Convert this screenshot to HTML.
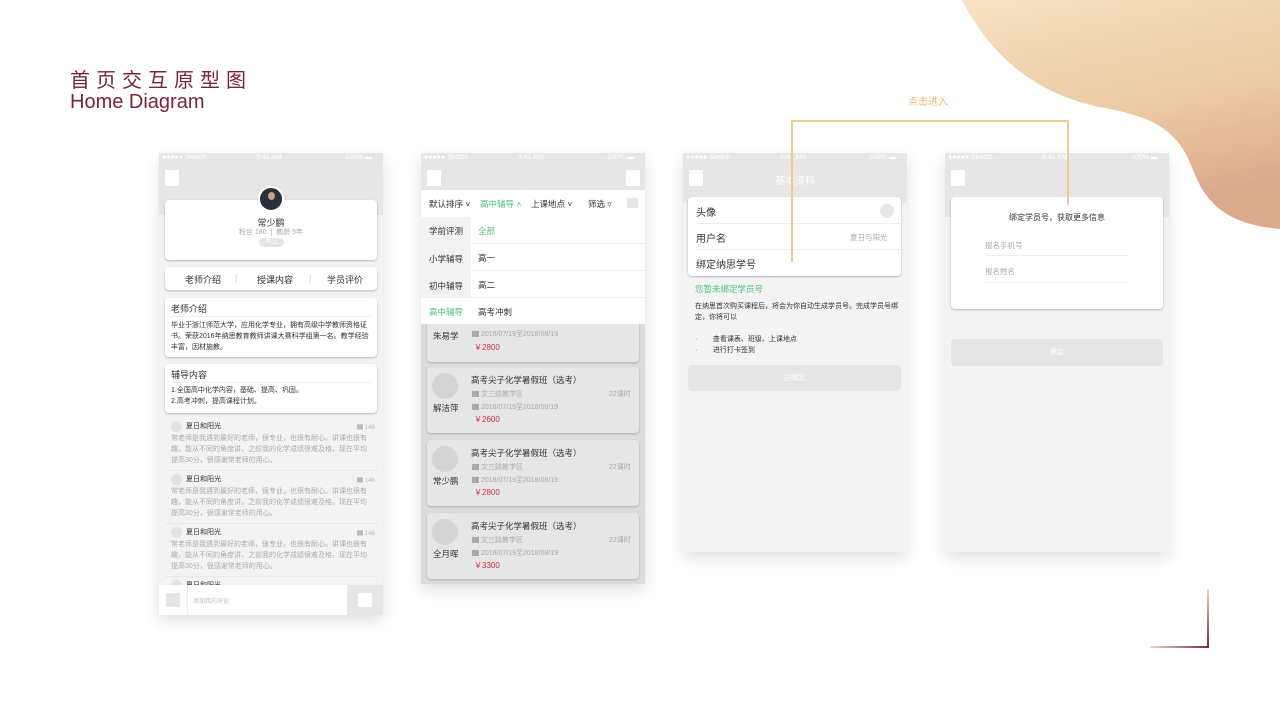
<!DOCTYPE html><html><head><meta charset="utf-8"><style>
*{margin:0;padding:0;box-sizing:border-box}
body{width:1280px;height:720px;overflow:hidden;background:#fff;position:relative;font-family:"Liberation Sans","Noto Sans CJK SC",sans-serif;color:#333}
.a{position:absolute}
.ph{position:absolute;background:#f3f3f3;box-shadow:0 6px 14px rgba(0,0,0,.12);overflow:hidden}
.sb{position:absolute;left:0;top:0;width:224px;height:11px;font-size:7px;color:#fff}
.sb span{position:absolute;top:1px}
.hd{position:absolute;left:0;top:0;width:224px;background:#e6e6e6}
.sq{position:absolute;width:14px;height:16px;background:#fff}
.card{position:absolute;background:#fff;border-radius:4px;box-shadow:0 1px 2px rgba(0,0,0,.25)}
.t{position:absolute;white-space:nowrap}
</style></head><body>
<svg class="a" style="left:0;top:0" width="1280" height="720">
<defs><linearGradient id="g" x1="0" y1="0" x2="0.3" y2="1"><stop offset="0" stop-color="#f6e2c2"/><stop offset="0.6" stop-color="#ecc9a4"/><stop offset="1" stop-color="#dca98d"/></linearGradient>
<linearGradient id="g2" x1="0" y1="0" x2="1" y2="0"><stop offset="0" stop-color="#f2d8c8"/><stop offset="1" stop-color="#7a2a3a"/></linearGradient>
<linearGradient id="g3" x1="0" y1="0" x2="0" y2="1"><stop offset="0" stop-color="#f2d8c8"/><stop offset="1" stop-color="#7a2a3a"/></linearGradient></defs>
<path d="M962,0 C990,55 1035,95 1105,108 C1160,118 1180,135 1193,170 C1208,210 1235,225 1280,229 L1280,0 Z" fill="url(#g)"/>
<rect x="1150" y="646" width="59" height="2" fill="url(#g2)"/>
<rect x="1207" y="589" width="2" height="59" fill="url(#g3)"/>
</svg>
<div class="t" style="left:70px;top:70px;font-size:20px;line-height:22px;letter-spacing:6px;color:#7b2338">首页交互原型图</div>
<div class="t" style="left:70px;top:91px;font-size:20px;line-height:22px;color:#7b2338">Home Diagram</div>
<div class="t" style="left:908px;top:93px;font-size:10px;color:#f0b878">点击进入</div>

<!-- phone 1 -->
<div class="ph" style="left:159px;top:153px;width:224px;height:462px">
<div class="hd" style="height:62px"></div>
<div class="sb"><span style="left:3px">●●●●● Sketch</span><span style="left:97px">9:41 AM</span><span style="left:186px">100% ▬</span></div>
<div class="sq" style="left:6px;top:17px"></div>
<div class="card" style="left:6px;top:47px;width:212px;height:60px"></div>
<div class="a" style="left:99px;top:33px;width:26px;height:26px;border-radius:50%;background:#2b2f3a;border:2px solid #fff"><div class="a" style="left:8px;top:4px;width:7px;height:8px;border-radius:50%;background:#c9a08a"></div></div>
<div class="t" style="left:0;width:224px;text-align:center;top:63px;font-size:9px">常少鹏</div>
<div class="t" style="left:0;width:224px;text-align:center;top:74px;font-size:7px;color:#aaa">粉丝 180 &nbsp;|&nbsp; 教龄 5年</div>
<div class="a" style="left:100px;top:85px;width:25px;height:9px;border-radius:5px;background:#e6e6e6;font-size:6px;color:#fff;text-align:center;line-height:9px">关注</div>
<div class="card" style="left:6px;top:114px;width:212px;height:23px;font-size:9px"><span class="t" style="left:20px;top:6px">老师介绍</span><span class="t" style="left:70px;top:6px;color:#ccc">|</span><span class="t" style="left:92px;top:6px">授课内容</span><span class="t" style="left:144px;top:6px;color:#ccc">|</span><span class="t" style="left:162px;top:6px">学员评价</span></div>
<div class="card" style="left:6px;top:145px;width:212px;height:59px"><div class="t" style="left:6px;top:4px;font-size:9px">老师介绍</div><div class="a" style="left:6px;top:18px;width:200px;border-top:1px solid #eee"></div><div class="a" style="left:6px;top:22px;width:200px;font-size:7px;line-height:11px">毕业于浙江师范大学，应用化学专业，拥有高级中学教师资格证书。荣获2016年纳思教育教师讲课大赛科学组第一名。教学经验丰富，因材施教。</div></div>
<div class="card" style="left:6px;top:211px;width:212px;height:49px"><div class="t" style="left:6px;top:4px;font-size:9px">辅导内容</div><div class="a" style="left:6px;top:18px;width:200px;border-top:1px solid #eee"></div><div class="a" style="left:6px;top:21px;font-size:7px;line-height:11px">1.全国高中化学内容，基础、提高、巩固。<br>2.高考冲刺，提高课程计划。</div></div>
<div class="a" style="left:6px;top:265px;width:212px">
<div style="height:53px;position:relative;border-bottom:1px solid #e8e8e8"><div class="a" style="left:6px;top:3px;width:11px;height:11px;border-radius:50%;background:#e3e3e3"></div><div class="t" style="left:21px;top:3px;font-size:7px">夏日和阳光</div><div class="t" style="left:192px;top:4px;font-size:6px;color:#bbb">▇ 146</div><div class="a" style="left:6px;top:15px;width:200px;font-size:7px;line-height:11px;color:#aaa">常老师是我遇到最好的老师，很专业，也很有耐心。讲课也很有趣，能从不同的角度讲，之前我的化学成绩很难及格，现在平均提高30分，很感谢常老师的用心。</div></div>
<div style="height:53px;position:relative;border-bottom:1px solid #e8e8e8"><div class="a" style="left:6px;top:3px;width:11px;height:11px;border-radius:50%;background:#e3e3e3"></div><div class="t" style="left:21px;top:3px;font-size:7px">夏日和阳光</div><div class="t" style="left:192px;top:4px;font-size:6px;color:#bbb">▇ 146</div><div class="a" style="left:6px;top:15px;width:200px;font-size:7px;line-height:11px;color:#aaa">常老师是我遇到最好的老师，很专业，也很有耐心。讲课也很有趣，能从不同的角度讲，之前我的化学成绩很难及格，现在平均提高30分，很感谢常老师的用心。</div></div>
<div style="height:53px;position:relative;border-bottom:1px solid #e8e8e8"><div class="a" style="left:6px;top:3px;width:11px;height:11px;border-radius:50%;background:#e3e3e3"></div><div class="t" style="left:21px;top:3px;font-size:7px">夏日和阳光</div><div class="t" style="left:192px;top:4px;font-size:6px;color:#bbb">▇ 146</div><div class="a" style="left:6px;top:15px;width:200px;font-size:7px;line-height:11px;color:#aaa">常老师是我遇到最好的老师，很专业，也很有耐心。讲课也很有趣，能从不同的角度讲，之前我的化学成绩很难及格，现在平均提高30分，很感谢常老师的用心。</div></div>
<div style="height:20px;position:relative"><div class="a" style="left:6px;top:3px;width:11px;height:11px;border-radius:50%;background:#e3e3e3"></div><div class="t" style="left:21px;top:3px;font-size:7px">夏日和阳光</div></div>
</div>
<div class="a" style="left:0;top:432px;width:188px;height:30px;background:#fff"><div class="a" style="left:7px;top:8px;width:14px;height:14px;background:#e6e6e6"></div><div class="a" style="left:28px;top:0;height:30px;border-left:1px solid #eee"></div><div class="t" style="left:34px;top:11px;font-size:6px;color:#bbb">添加我的评论</div></div>
<div class="a" style="left:188px;top:432px;width:36px;height:30px;background:#e6e6e6"><div class="a" style="left:11px;top:8px;width:14px;height:14px;background:#fff"></div></div>
</div>

<!-- phone 2 -->
<div class="ph" style="left:421px;top:153px;width:224px;height:431px;background:#dcdcdc">
<div class="hd" style="height:37px"></div>
<div class="sb"><span style="left:3px">●●●●● Sketch</span><span style="left:97px">9:41 AM</span><span style="left:186px">100% ▬</span></div>
<div class="sq" style="left:6px;top:17px"></div><div class="sq" style="left:205px;top:17px"></div>
<div class="a" style="left:0;top:37px;width:224px;height:27px;background:#fff;font-size:8.5px"><span class="t" style="left:8px;top:8px">默认排序 ˅</span><span class="t" style="left:59px;top:8px;color:#4cc07a">高中辅导 ˄</span><span class="t" style="left:110px;top:8px">上课地点 ˅</span><span class="t" style="left:167px;top:8px">筛选 ▿</span><div class="a" style="left:206px;top:8px;width:11px;height:10px;background:#e6e6e6"></div></div>
<div class="a" style="left:0;top:64px;width:50px;height:107px;background:#f2f2f2"></div>
<div class="a" style="left:50px;top:64px;width:174px;height:107px;background:#fff"></div>
<div class="a" style="left:0;top:144px;width:224px;height:27px;background:#fff"></div>
<div class="a" style="left:50px;top:90px;width:174px;border-top:1px solid #eee"></div>
<div class="a" style="left:50px;top:117px;width:174px;border-top:1px solid #eee"></div>
<div class="a" style="left:0;top:144px;width:224px;border-top:1px solid #eee"></div>
<div class="t" style="left:8px;top:72px;font-size:8.5px">学前评测</div><div class="t" style="left:57px;top:72px;font-size:8.5px;color:#4cc07a">全部</div>
<div class="t" style="left:8px;top:100px;font-size:8.5px">小学辅导</div><div class="t" style="left:57px;top:99px;font-size:8.5px">高一</div>
<div class="t" style="left:8px;top:127px;font-size:8.5px">初中辅导</div><div class="t" style="left:57px;top:126px;font-size:8.5px">高二</div>
<div class="t" style="left:8px;top:153px;font-size:8.5px;color:#4cc07a">高中辅导</div><div class="t" style="left:57px;top:153px;font-size:8.5px">高考冲刺</div>
<div class="card" style="left:6px;top:166px;width:212px;height:43px;background:#e6e6e6;box-shadow:0 1px 2px rgba(0,0,0,.2)"><div class="t" style="left:6px;top:11px;font-size:8.5px">朱易学</div><div class="t" style="left:45px;top:10px;font-size:7px;color:#aaa">▇ 2018/07/19至2018/08/19</div><div class="t" style="left:47px;top:23px;font-size:8px;color:#d0312d">￥2800</div></div>
<div class="a" style="left:0;top:144px;width:224px;height:27px;background:#fff;border-top:1px solid #eee"><div class="t" style="left:8px;top:8px;font-size:8.5px;color:#4cc07a">高中辅导</div><div class="t" style="left:57px;top:8px;font-size:8.5px">高考冲刺</div></div>
<div class="card" style="left:6px;top:214px;width:212px;height:66px;background:#e6e6e6;box-shadow:0 1px 2px rgba(0,0,0,.2)"><div class="a" style="left:5px;top:6px;width:26px;height:26px;border-radius:50%;background:#d4d4d4"></div><div class="t" style="left:6px;top:35px;font-size:8.5px">解洁萍</div><div class="t" style="left:44px;top:7px;font-size:8.5px">高考尖子化学暑假班（选考）</div><div class="t" style="left:45px;top:22px;font-size:7px;color:#aaa">▇ 文三路教学区</div><div class="t" style="left:182px;top:22px;font-size:7px;color:#aaa">22课时</div><div class="t" style="left:45px;top:35px;font-size:7px;color:#aaa">▇ 2018/07/19至2018/08/19</div><div class="t" style="left:47px;top:47px;font-size:8px;color:#d0312d">￥2600</div></div>
<div class="card" style="left:6px;top:287px;width:212px;height:66px;background:#e6e6e6;box-shadow:0 1px 2px rgba(0,0,0,.2)"><div class="a" style="left:5px;top:6px;width:26px;height:26px;border-radius:50%;background:#d4d4d4"></div><div class="t" style="left:6px;top:35px;font-size:8.5px">常少鹏</div><div class="t" style="left:44px;top:7px;font-size:8.5px">高考尖子化学暑假班（选考）</div><div class="t" style="left:45px;top:22px;font-size:7px;color:#aaa">▇ 文三路教学区</div><div class="t" style="left:182px;top:22px;font-size:7px;color:#aaa">22课时</div><div class="t" style="left:45px;top:35px;font-size:7px;color:#aaa">▇ 2018/07/19至2018/08/19</div><div class="t" style="left:47px;top:47px;font-size:8px;color:#d0312d">￥2800</div></div>
<div class="card" style="left:6px;top:360px;width:212px;height:66px;background:#e6e6e6;box-shadow:0 1px 2px rgba(0,0,0,.2)"><div class="a" style="left:5px;top:6px;width:26px;height:26px;border-radius:50%;background:#d4d4d4"></div><div class="t" style="left:6px;top:35px;font-size:8.5px">全月晖</div><div class="t" style="left:44px;top:7px;font-size:8.5px">高考尖子化学暑假班（选考）</div><div class="t" style="left:45px;top:22px;font-size:7px;color:#aaa">▇ 文三路教学区</div><div class="t" style="left:182px;top:22px;font-size:7px;color:#aaa">22课时</div><div class="t" style="left:45px;top:35px;font-size:7px;color:#aaa">▇ 2018/07/19至2018/08/19</div><div class="t" style="left:47px;top:47px;font-size:8px;color:#d0312d">￥3300</div></div>
</div>

<!-- phone 3 -->
<div class="ph" style="left:683px;top:153px;width:224px;height:399px">
<div class="hd" style="height:50px"></div>
<div class="sb"><span style="left:3px">●●●●● Sketch</span><span style="left:97px">9:41 AM</span><span style="left:186px">100% ▬</span></div>
<div class="sq" style="left:6px;top:17px"></div>
<div class="t" style="left:0;width:224px;text-align:center;top:19px;font-size:10px;color:#fff">基本资料</div>
<div class="card" style="left:5px;top:44px;width:213px;height:79px"><div class="t" style="left:8px;top:7px;font-size:10px">头像</div><div class="a" style="left:192px;top:7px;width:14px;height:14px;border-radius:50%;background:#e6e6e6"></div><div class="a" style="left:7px;top:26px;width:206px;border-top:1px solid #eee"></div><div class="t" style="left:8px;top:33px;font-size:10px">用户名</div><div class="t" style="left:162px;top:35px;font-size:7.5px;color:#aaa">夏日与阳光</div><div class="a" style="left:7px;top:52px;width:206px;border-top:1px solid #eee"></div><div class="t" style="left:8px;top:59px;font-size:10px">绑定纳思学号</div></div>
<div class="t" style="left:12px;top:130px;font-size:8.5px;color:#4cc07a">您暂未绑定学员号</div>
<div class="a" style="left:12px;top:148px;width:205px;font-size:7px;line-height:11px">在纳思首次购买课程后，将会为你自动生成学员号。完成学员号绑定，你将可以</div>
<div class="t" style="left:12px;top:181px;font-size:7px">·&nbsp;&nbsp;&nbsp;&nbsp;&nbsp;&nbsp;&nbsp;&nbsp;查看课表、班级、上课地点</div>
<div class="t" style="left:12px;top:192px;font-size:7px">·&nbsp;&nbsp;&nbsp;&nbsp;&nbsp;&nbsp;&nbsp;&nbsp;进行打卡签到</div>
<div class="a" style="left:5px;top:212px;width:213px;height:26px;border-radius:4px;background:#e6e6e6;font-size:7.5px;color:#fff;text-align:center;line-height:26px">去绑定</div>
</div>

<!-- phone 4 -->
<div class="ph" style="left:945px;top:153px;width:224px;height:399px">
<div class="hd" style="height:64px"></div>
<div class="sb"><span style="left:3px">●●●●● Sketch</span><span style="left:97px">9:41 AM</span><span style="left:186px">100% ▬</span></div>
<div class="sq" style="left:6px;top:17px"></div>
<div class="card" style="left:6px;top:44px;width:212px;height:112px"><div class="t" style="left:0;width:212px;text-align:center;top:15px;font-size:8px">绑定学员号，获取更多信息</div><div class="t" style="left:34px;top:43px;font-size:7.5px;color:#aaa">报名手机号</div><div class="a" style="left:34px;top:58px;width:144px;border-top:1px solid #eee"></div><div class="t" style="left:34px;top:69px;font-size:7.5px;color:#aaa">报名姓名</div><div class="a" style="left:34px;top:85px;width:144px;border-top:1px solid #eee"></div></div>
<div class="a" style="left:6px;top:186px;width:212px;height:27px;border-radius:4px;background:#e6e6e6;font-size:7px;color:#fff;text-align:center;line-height:27px">确定</div>
</div>
<svg class="a" style="left:0;top:0" width="1280" height="720"><path d="M792,262 L792,121 L1068,121 L1068,205" fill="none" stroke="#f3c993" stroke-width="2"/></svg>
</body></html>
